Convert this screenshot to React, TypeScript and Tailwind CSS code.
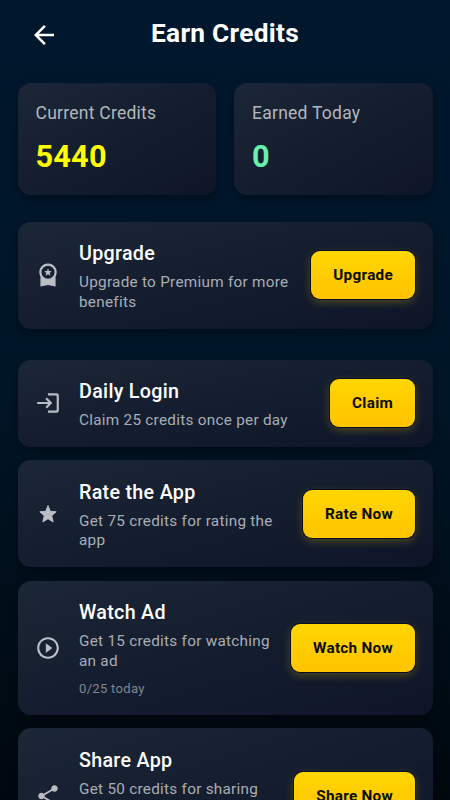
import type { ReactNode } from 'react';
import { MdArrowBack, MdLogin, MdPlayCircleOutline, MdShare } from 'react-icons/md';

type Task = {
  id: string;
  title: string;
  description: string;
  action: string;
  icon: ReactNode;
  progress?: string;
  tall?: boolean;
};

function BadgeIcon() {
  return (
    <svg viewBox="0 0 24 24" className="size-[26px]" fill="currentColor">
      <path
        fillRule="evenodd"
        d="M12 1.3a8.1 8.1 0 0 0-7 12.1v9.3L12 21.2l7 1.5v-9.3a8.1 8.1 0 0 0-7-12.1Zm0 2.1a6 6 0 1 1 0 12 6 6 0 0 1 0-12Z"
      />
      <path d="m12 6 1 2.3 2.5.2-1.9 1.6.6 2.5-2.2-1.3-2.2 1.3.6-2.5-1.9-1.6 2.5-.2z" />
    </svg>
  );
}

function StarIcon() {
  return (
    <svg viewBox="0 0 26 26" className="size-[26px]" fill="currentColor" stroke="currentColor" strokeWidth="1" strokeLinejoin="round">
      <path d="m13 4.6 2.3 5.7 5.9.5-4.5 4 1.5 6.2-5.2-3.3-5.2 3.3 1.5-6.2-4.5-4 5.9-.5z" />
    </svg>
  );
}

const UPGRADE: Task = {
  id: 'upgrade',
  title: 'Upgrade',
  description: 'Upgrade to Premium for more benefits',
  action: 'Upgrade',
  icon: <BadgeIcon />,
};

const TASKS: Task[] = [
  {
    id: 'login',
    title: 'Daily Login',
    description: 'Claim 25 credits once per day',
    action: 'Claim',
    icon: <MdLogin className="size-[26px]" />,
  },
  {
    id: 'rate',
    title: 'Rate the App',
    description: 'Get 75 credits for rating the app',
    action: 'Rate Now',
    icon: <StarIcon />,
  },
  {
    id: 'watch',
    title: 'Watch Ad',
    description: 'Get 15 credits for watching an ad',
    action: 'Watch Now',
    icon: <MdPlayCircleOutline className="size-[26px]" />,
    progress: '0/25 today',
    tall: true,
  },
  {
    id: 'share',
    title: 'Share App',
    description: 'Get 50 credits for sharing',
    action: 'Share Now',
    icon: <MdShare className="size-[26px]" />,
    tall: true,
  },
];

function StatCard({ label, value, color }: { label: string; value: string; color: string }) {
  return (
    <div className="h-[112px] flex-1 rounded-[13px] bg-linear-to-br from-[#1b2636] to-[#0e1528] px-[18px] pt-[19px] shadow-[0_4px_9px_rgba(0,0,0,0.3)]">
      <p className="text-[17.5px] leading-[22px] tracking-[0.25px] text-[#b3b6bd]">{label}</p>
      <p className={`mt-[15px] text-[30.7px] leading-[36px] font-bold tracking-[0.2px] ${color}`}>{value}</p>
    </div>
  );
}

function TaskCard({ task }: { task: Task }) {
  return (
    <div
      className={`flex items-center rounded-[13px] bg-linear-to-br from-[#1b2636] to-[#0e1528] p-[17.5px] shadow-[0_4px_9px_rgba(0,0,0,0.3)] ${
        task.tall ? 'h-[134.5px]' : ''
      }`}
    >
      <div className="mr-[18px] shrink-0 text-[#b9bdc4]">{task.icon}</div>
      <div className="-mb-px min-w-0 flex-1 self-start">
        <h2 className="mb-[5px] pt-px text-[19.7px] leading-[28px] font-medium tracking-[0.3px] text-white">{task.title}</h2>
        <p className="text-[15.3px] leading-[19.5px] tracking-[0.27px] text-[#a9adb5]">{task.description}</p>
        {task.progress && (
          <p className="mt-[9px] text-[13.1px] leading-[18px] tracking-[0.27px] text-[#808590]">{task.progress}</p>
        )}
      </div>
      <button className="ml-[17px] h-[48px] shrink-0 rounded-[9px] bg-linear-to-b from-[#ffd600] to-[#ffc400] px-[22px] pt-px text-[15.3px] font-bold tracking-[0.27px] text-[#0c0b08] shadow-[0_0_0_1px_#0b0e20,0_3px_10px_rgba(255,214,0,0.27)]">
        {task.action}
      </button>
    </div>
  );
}

export default function App() {
  return (
    <div className="h-[800px] overflow-hidden bg-linear-to-b from-[#00172d] via-[#001526] via-50% to-[#00080e] font-[Roboto,sans-serif]">
      <header className="grid h-[82.5px] grid-cols-[60px_1fr_60px] items-start px-[18px] pt-[17px]">
        <button className="mt-[2.5px] ml-[10.5px] w-[30px] text-white" aria-label="Back">
          <MdArrowBack className="size-[30px]" />
        </button>
        <h1 className="text-center text-[26.3px] leading-[32px] font-bold tracking-[0.27px] text-white">Earn Credits</h1>
      </header>

      <main className="px-[17.5px]">
        <div className="flex gap-[18px]">
          <StatCard label="Current Credits" value="5440" color="text-[#ffff00]" />
          <StatCard label="Earned Today" value="0" color="text-[#69f0ae]" />
        </div>

        <div className="mt-[27px]">
          <TaskCard task={UPGRADE} />
        </div>

        <div className="mt-[31px] flex flex-col gap-[13.3px]">
          {TASKS.map((task) => (
            <TaskCard key={task.id} task={task} />
          ))}
        </div>
      </main>
    </div>
  );
}
